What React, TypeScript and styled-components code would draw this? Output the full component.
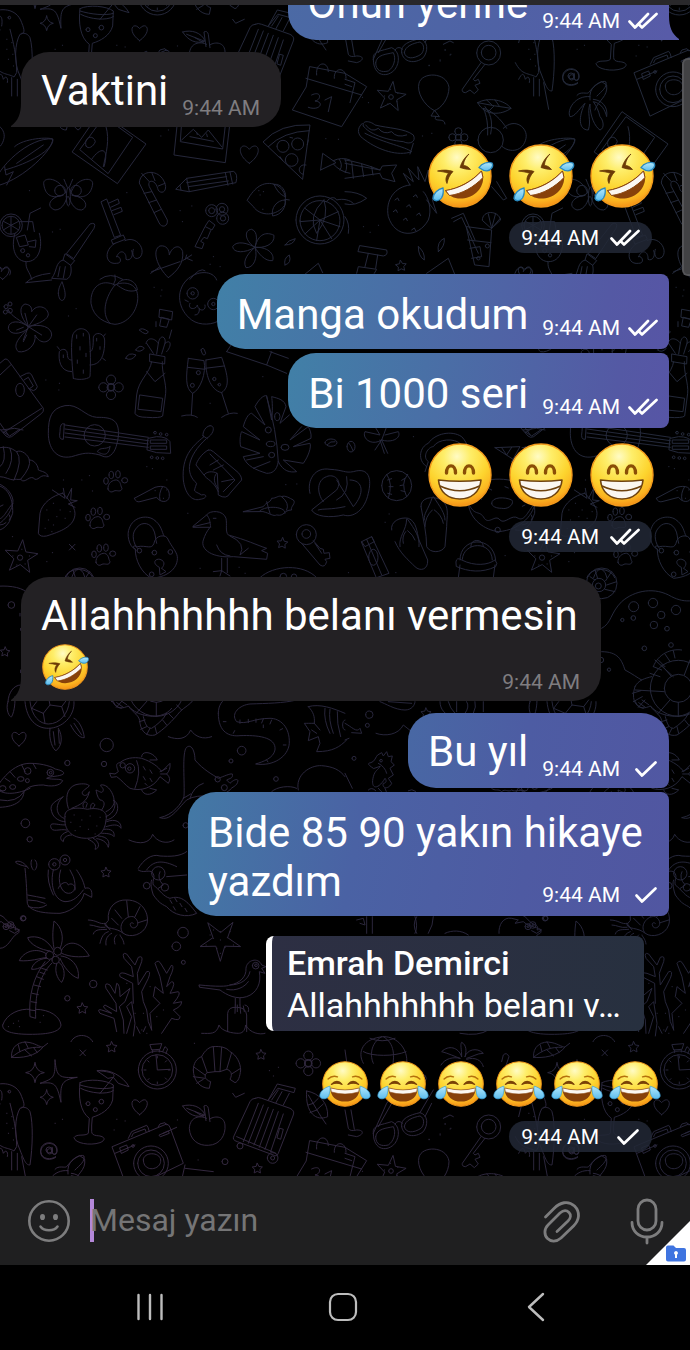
import React from "react";
import styled, { createGlobalStyle, css } from "styled-components";

const GlobalStyle = createGlobalStyle`
  *, *::before, *::after { box-sizing: border-box; }
  body { margin: 0; background: #000; }
  button { border: 0; padding: 0; background: none; font: inherit; color: inherit; cursor: pointer; }
  svg { display: block; }
`;

/* ---------- Wallpaper ---------- */

const c = (x: number, y: number, r: number) =>
  `M${x - r},${y}a${r},${r} 0 1 0 ${2 * r},0a${r},${r} 0 1 0 ${-2 * r},0`;
const e = (x: number, y: number, rx: number, ry: number) =>
  `M${x - rx},${y}a${rx},${ry} 0 1 0 ${2 * rx},0a${rx},${ry} 0 1 0 ${-2 * rx},0`;
const dots = (...pts: number[][]) => pts.map(([x, y]) => `M${x},${y}h1`).join("");
const heart = (x: number, y: number, s: number) =>
  `M${x},${y + s}C${x - s * 1.7},${y - s * 0.2} ${x - s * 0.8},${y - s * 1.5} ${x},${y - s * 0.5}C${x + s * 0.8},${y - s * 1.5} ${x + s * 1.7},${y - s * 0.2} ${x},${y + s}Z`;
const star = (x: number, y: number, r: number, inner = 0.5, turn = 0) => {
  const pts = Array.from({ length: 10 }, (_, i) => {
    const a = ((i * 36 - 90 + turn) * Math.PI) / 180;
    const q = i % 2 ? r * inner : r;
    return `${(x + q * Math.cos(a)).toFixed(1)},${(y + q * Math.sin(a)).toFixed(1)}`;
  });
  return `M${pts.join("L")}Z`;
};
const paw = (x: number, y: number) =>
  `M${x - 22},${y + 22}C${x - 24},${y + 5} ${x - 8},${y - 6} ${x + 4},${y - 5}C${x + 18},${y} ${x + 14},${y + 10} ${x + 20},${y + 20}C${x + 18},${y + 34} ${x + 4},${y + 24} ${x - 4},${y + 28}C${x - 12},${y + 34} ${x - 20},${y + 30} ${x - 22},${y + 22}Z` +
  e(x - 28, y - 2, 7, 10) + e(x - 12, y - 20, 7, 11) + e(x + 8, y - 22, 7, 11) + e(x + 28, y - 4, 9, 8);
const flower = (x: number, y: number, r: number) =>
  c(x, y, r * 0.5) + c(x, y - r, r * 0.6) + c(x + r, y, r * 0.6) + c(x, y + r, r * 0.6) + c(x - r, y, r * 0.6);
const sparkle = (x: number, y: number, w: number, h: number) =>
  `M${x},${y - h}Q${x + 3},${y - 3} ${x + w},${y}Q${x + 3},${y + 3} ${x},${y + h}Q${x - 3},${y + 3} ${x - w},${y}Q${x - 3},${y - 3} ${x},${y - h}Z`;

/* Each region holds doodles drawn at three times their final size. */
const regions: { x: number; y: number; d: string[] }[] = [
  {
    x: 0, y: 0,
    d: [
      "M-20,560C-10,500 90,410 158,417C160,450 70,535 0,555M20,555L40,515L18,525L14,500M50,490L130,435",
      "M217,455L300,335L438,432L353,550ZM240,448L312,350L398,412L325,520ZM258,438C250,410 280,402 286,425C280,440 265,450 258,438M275,478C300,440 330,440 312,500M318,380C330,420 318,460 310,500",
      "M535,340L522,465L676,488L692,350ZM546,350L541,425L668,447L678,358ZM545,420L580,388L605,412L625,390L665,440",
      "M570,410L640,424M590,398l2,6M620,402l2,8",
      heart(748, 462, 28),
      "M790,425Q840,370 930,375L908,537ZM805,440Q850,395 928,392" + c(849, 439, 18) + c(893, 432, 18) + c(875, 480, 19) + "M918,495C895,490 890,520 910,523M840,470l8,12M925,420l-3,14M870,412l8,2",
      "M962,510L968,460L1008,488L962,510M1000,482Q1025,470 1050,480M1000,492Q1020,515 1050,520M1018,478Q1030,495 1020,510M1035,478Q1045,498 1036,518",
      "M198,580C180,530 130,530 131,550C134,580 150,600 190,585C150,590 135,620 165,630C190,630 198,600 202,590M212,580C230,530 280,530 278,552C274,582 255,600 215,585C255,590 270,620 245,630C220,632 210,600 206,590" + e(205, 590, 6, 28) + "M202,562Q195,545 192,538M208,562Q215,545 218,538" + c(180, 572, 16) + c(228, 572, 16),
      "M418,548C420,505 488,505 497,560C497,583 475,580 473,565C465,535 440,540 448,560L502,660C505,680 485,685 478,670ZM425,520L448,545M455,517L465,542M495,550L475,558M432,580L455,575M446,608L470,600M462,638L484,628",
      "M528,567L560,535L700,514Q715,520 708,548L568,575ZM560,535L568,575M560,548L680,530M565,560L685,543M676,518L684,556M690,516L698,552M540,556L543,570",
      "M304,605L320,597L362,706L344,712ZM325,610L354,597L358,610L332,622M336,632L363,622L367,634L342,644M335,720L370,705L376,718L340,732Z",
      "M345,730C310,750 315,795 350,790C370,790 360,765 350,770M375,722C410,705 440,750 420,772C400,785 395,760 400,748M350,770C360,745 380,755 378,778C392,785 402,765 395,752",
      c(635, 632, 18) + c(666, 628, 18) + c(668, 655, 18) + c(635, 632, 9) + c(666, 628, 8) + c(669, 655, 8),
      "M628,662L645,675L636,690L616,680ZM614,682L585,740L606,746L612,730L602,724L612,712L622,716L632,692",
      "M742,600C765,560 790,545 820,552C850,560 862,590 855,615C830,650 780,650 760,620ZM822,553C845,550 858,575 857,590C840,585 830,570 822,553M855,600C830,600 812,625 818,648C845,645 860,620 855,600M855,598L868,600" + dots([790, 575], [780, 585], [776, 572], [788, 628]),
      c(960, 660, 72) + c(960, 662, 60) + "M960,660L915,625M960,660L900,665M960,660L915,702M960,660L950,722M960,660L995,716M960,660L1020,680M960,660L1015,635M972,600Q920,650 950,700Q990,650 972,600M980,605C990,590 1005,590 1010,600C1030,595 1050,600 1060,610",
      "M765,742C735,725 730,690 755,688C775,695 770,725 765,742C775,700 800,695 822,706C825,735 790,745 765,742C800,740 825,760 818,782C795,785 775,760 765,742C775,775 760,805 738,803C725,780 750,755 765,742C735,760 700,760 698,740C710,720 745,730 765,742",
      "M505,833C470,800 455,750 480,738C500,735 508,750 508,765C515,740 540,730 548,755C552,790 530,815 505,833M455,815L540,785M480,800L452,820M548,782L575,765M560,775L577,782M556,778L560,765",
      "M200,760L270,672Q290,665 282,685L222,775ZM196,762L224,782L212,796L190,780ZM190,780C165,785 172,815 155,835L200,838C215,830 215,810 212,796M180,800l-6,30M196,800l-6,34",
      c(33, 676, 34) + c(33, 676, 27) + "M33,676V650M33,676L56,664M33,676L56,690M33,676V702M33,676L10,690M33,676L10,664",
      "M82,690L90,640L122,624M45,700C30,750 50,785 80,785C115,785 130,745 118,700M60,665L98,665L103,695M50,712L75,705L85,735L60,740ZM85,725L108,720L106,742L88,740" + c(68, 752, 6) + c(84, 766, 5) + "M78,786C76,810 90,815 95,838",
      heart(8, 818, 20),
      "M855,735Q865,720 886,716Q880,735 855,735M855,795Q850,775 868,765Q876,790 855,795M300,838Q330,815 368,838M570,838Q600,800 615,812M900,835L955,790L968,818",
      "M930,200L1035,220L1100,260L1025,380L877,330L918,262ZM918,235L1085,285M950,225C945,185 985,180 985,215M1003,235C1000,200 1040,200 1038,235M935,285C965,270 965,300 945,303C975,305 960,335 925,322M975,300L995,290L985,335",
      dots([88, 572], [380, 578], [540, 632], [575, 618], [547, 665], [157, 696], [180, 688], [640, 770], [630, 793], [660, 800], [977, 416], [1015, 418], [482, 408], [505, 390]),
    ],
  },
  {
    x: 345, y: 0,
    d: [
      "M268,332C235,315 215,275 222,250C230,215 305,215 312,262C312,295 290,325 268,332M268,332L258,348L282,350ZM272,350C262,370 300,350 300,372",
      star(138, 291, 46, 0.42, 8) + c(138, 291, 7) + dots([136, 268], [118, 288], [128, 312], [155, 305], [158, 280]),
      "M52,370C35,385 35,405 60,420C100,450 160,470 200,455C180,440 120,430 60,400M55,378C50,360 75,362 90,375C130,385 180,385 205,405C215,425 195,435 175,425C120,420 70,400 55,378M62,375Q80,400 100,385Q115,405 140,395Q155,415 185,405M205,430L195,462",
      c(437, 420, 38) + "M475,385C510,350 550,385 543,415C535,455 495,460 472,440M437,402C445,360 435,340 420,320M428,405C430,360 420,335 415,325M415,325C440,330 470,360 485,385M398,308C430,290 480,300 498,325C470,345 420,350 398,308M398,308C430,315 465,320 498,325M425,300l15,14M450,300l12,17M430,335l16,-16",
      "M0,490L105,510M0,535L105,520M0,480Q40,485 105,510L112,498L155,495L140,520L150,545L112,535L105,522M20,485L25,535M50,492L56,530M80,500L84,525",
      flower(340, 412, 18) + "M345,435Q340,450 350,460",
      "M195,555C150,560 120,600 130,650C150,715 220,715 250,660C262,630 250,590 235,575M195,555L175,520L205,545L190,505L222,540L218,500L240,545L250,510L258,560L275,540L262,600L275,640L245,600M150,600l8,-6l4,8M145,635l8,-6l4,8M175,660l8,-6l4,8M200,690l8,-6l4,8M185,620l8,-6l4,8M215,645l8,-6l4,8M205,590l8,-6l4,8",
      "M320,655L355,640L390,720M326,665L350,652L400,760M365,680L440,690L432,800L390,795ZM368,720L438,728M375,745L405,740L410,770L380,775" + c(427, 738, 6) + c(400, 775, 5) + "M412,660C412,630 460,630 467,660L440,685ZM440,685L430,642M440,685L452,640M440,685L466,655",
      "M45,737L125,750Q130,765 115,768L40,755ZM70,760L60,800M98,765L92,805M35,820L40,800L95,808L88,820",
      "M220,740Q240,755 238,780Q220,770 220,740M280,755Q275,725 298,715Q300,740 280,755M245,820L310,775L330,825" + star(168, 798, 17, 0.5, -5),
      "M510,820C520,790 540,805 535,815C550,790 570,810 560,825",
      "M735,300C730,260 760,250 770,245L785,255C790,290 760,300 750,330M735,290C690,285 665,330 675,350C690,350 700,330 720,310C700,350 700,390 730,390C740,360 725,340 735,312C735,350 750,380 765,390C780,385 775,360 765,350C760,330 755,320 745,305C770,310 780,330 785,350C790,320 770,300 745,298",
      c(680, 232, 8) + "M688,222L688,238C700,248 705,235 700,222C690,200 655,205 653,235C655,260 685,260 698,250",
      "M575,440C600,415 680,410 690,418C690,450 620,490 545,510M440,560L475,600L485,595L455,545M0,575Q40,575 65,595Q30,620 0,612M0,650Q15,670 10,700",
      dots([252, 197], [285, 183], [315, 165], [300, 150], [232, 408], [260, 400], [55, 680], [100, 676], [75, 697], [70, 308], [52, 292]),
    ],
  },
  {
    x: 0, y: 280,
    d: [
      "M85,140C60,110 55,80 75,72C95,75 95,85 95,95C110,70 145,80 145,105C140,125 100,135 85,140C120,130 155,140 155,165C150,190 120,195 105,165C110,195 80,220 55,215C35,195 60,170 85,145C60,165 30,165 25,145C25,120 60,120 85,140M85,140C60,120 35,110 25,90M85,140L110,105M85,140L125,165M85,140L70,180M85,140L75,100M70,185l10,-20M50,150l20,-8",
      c(18, 80, 6) + c(30, 72, 6) + c(16, 96, 6) + c(30, 92, 7),
      "M345,15C305,-5 270,20 273,70C280,115 320,130 345,133C390,130 420,80 412,40C405,5 365,5 345,15C320,45 300,100 330,130M340,15Q350,0 345,-15M350,14C370,-15 410,0 412,30C385,40 365,25 350,14",
      "M560,0C525,35 535,90 575,120C600,138 640,135 660,120M560,0C590,-30 640,-30 650,0" + c(578, 40, 17) + c(578, 40, 5) + c(640, 72, 17) + c(640, 72, 5) + "M570,70C560,90 590,90 592,75C595,95 620,95 615,75M598,85Q600,105 585,105M555,60l10,5",
      "M175,40C175,20 185,10 186,5C195,30 200,50 190,60C182,65 176,55 175,40M78,8L155,0M78,8Q100,-15 150,-20",
      "M220,295C215,240 212,190 218,165C228,140 260,140 268,165C272,210 272,260 270,290C260,300 230,300 220,295M215,275C180,275 175,240 178,215C185,205 200,205 202,220C202,240 210,240 215,240M270,255C300,255 315,230 314,180C312,155 280,155 280,175C280,210 275,215 270,215" + "M230,165v10M250,160v8M240,200v10M258,220v10M232,240v10M250,270v10M290,175v8M300,200v8M190,225v8M172,200l6,8M310,170l6,-8M308,235l8,6",
      flower(333, 322, 23) + c(333, 322, 10),
      "M455,245C450,280 415,300 410,345L405,400Q410,412 440,412Q480,415 488,408L497,340C500,310 485,280 487,245M450,222L495,230L494,252L450,245ZM438,190C445,165 470,180 475,190C480,160 500,170 495,190C515,175 515,200 500,215M460,220L440,190M470,222L475,190M485,222L495,190M440,275L465,305L495,280M420,345L488,355L483,395L415,388Z",
      "M480,88L518,95L515,120L478,112ZM485,112L508,118L500,142L480,138ZM418,150Q425,140 445,155Q440,170 418,150M407,210Q420,190 433,205Q420,220 407,210M377,235Q385,215 408,225Q395,245 377,235M515,150L508,175M468,125V140",
      "M565,235L612,242C620,280 600,330 578,340C555,325 558,290 565,235M563,262L615,268M618,240L665,232C685,290 690,320 665,338C630,330 615,280 618,240M615,265L672,258M578,340L574,405M545,408Q575,400 592,412M665,338L685,400M665,412Q690,395 712,400M603,210Q610,195 617,220Q610,235 603,210" + c(595, 278, 6) + c(577, 316, 6) + c(643, 297, 5) + c(658, 314, 4),
      "M-60,300L15,237Q22,235 28,245L130,385Q132,395 125,400L35,470Q25,475 18,468L-60,380M0,285L32,255M0,430L25,465M10,458L125,385M60,290L80,280Q90,275 95,285L112,320Q110,330 100,332L85,325M72,300L85,292L100,318L90,325" + e(60, 330, 13, 20),
      "M300,525C260,515 250,520 215,530C165,540 145,500 145,460C145,410 155,385 195,377C235,370 255,410 290,412C330,412 360,415 355,470C350,500 345,520 325,530C315,532 310,530 300,525M193,432L190,478Q175,480 180,455Q180,425 193,432M195,435L445,472M195,447L445,482M195,459L445,492M195,471L445,502M445,475L470,470Q500,470 510,485L512,520L470,518L442,510ZM452,480H500V490H452ZM452,498H500V508H452Z" + c(284, 466, 32) + c(465, 458, 4) + c(482, 462, 4) + c(500, 464, 4) + c(455, 532, 4) + c(472, 534, 4) + c(488, 535, 4) + "M330,500C325,530 310,525 292,515C300,500 315,510 330,500",
      "M0,503C30,498 40,510 50,515C65,508 85,525 88,540C105,540 115,560 115,570C125,575 140,575 145,590C120,580 120,600 105,598C90,580 75,615 62,598C50,600 45,595 42,600C30,600 15,590 0,590M30,505Q45,540 18,580M50,515Q70,540 42,600M88,540Q95,560 62,598M10,500Q20,545 0,560",
      "M630,437C610,440 605,470 612,470C575,500 545,530 550,600C555,640 575,665 600,658C625,655 620,640 605,645C580,630 580,640 590,610C555,580 560,530 620,475C645,460 645,435 630,437M608,467L622,476",
      "M625,510C605,520 590,545 588,555L612,585C620,575 635,572 652,580L655,645Q680,660 690,640L725,600C725,590 720,585 715,578L640,515Q632,508 625,510M630,522L705,600L670,635M612,585C620,600 640,600 655,635M630,555L655,540M640,570L670,555M665,605L700,598M655,625C640,610 640,590 650,580",
      "M835,545C830,575 815,580 800,580C770,570 740,560 730,530L780,520L722,500C718,480 722,460 725,455L780,480L730,440C735,420 745,400 755,400L795,435L765,380C775,360 790,345 800,347L815,420C820,380 815,350 815,350C835,355 855,360 858,380L840,430L868,405M835,545C850,575 870,578 890,575L850,540L910,550C925,530 935,500 930,490L880,500L933,475C935,460 930,450 925,440L870,480L905,440M800,350Q830,450 835,545M740,540L790,530M760,565L810,545" + e(812, 492, 13, 8) + e(855, 502, 12, 9) + e(832, 410, 8, 12) + e(815, 525, 9, 8) + e(805, 450, 9, 9),
      e(993, 488, 18, 11) + "M982,494Q992,482 1005,485",
      "M730,695L790,680C800,665 810,670 815,655C830,655 835,645 845,650C855,645 870,655 880,660C890,670 870,680 875,690C850,690 855,710 830,705C820,710 810,700 790,695ZM780,692C800,675 860,680 855,700M800,665L810,700M845,650Q870,670 860,690",
      "M188,640C160,645 125,670 120,700L115,760Q120,772 140,768C180,755 225,740 225,700C225,680 200,650 188,640ZM157,630L195,655L190,625M200,655L215,625L212,660L232,662L205,672L225,682" + dots([140, 690], [160, 670], [180, 690], [145, 720], [170, 710], [195, 715], [135, 745], [160, 735], [210, 695], [155, 755]),
      paw(346, 605), paw(292, 715), paw(310, 825),
      "M403,655L465,622C490,615 510,620 508,650C505,670 480,668 470,652L420,665Q408,668 403,655M488,620Q475,640 480,660" + dots([490, 655], [500, 630], [465, 632]),
      "M406,808C385,800 380,760 388,745C400,710 440,705 460,718C485,735 485,755 492,768M412,805C400,790 395,765 405,750C420,725 445,725 458,745C468,760 465,775 470,790M406,808C395,800 400,795 412,800C440,795 455,810 462,790C465,765 500,760 505,780C515,800 530,815 532,830C535,860 510,890 455,895C425,880 405,840 406,808" + c(418, 812, 7) + c(463, 818, 7) + c(511, 816, 7) + c(455, 883, 7) + "M485,865L498,875L480,885L478,862C455,850 465,835 480,838C500,845 490,860 485,865",
      "M580,738L620,705C630,690 670,690 678,715C682,735 675,755 685,765C740,780 770,795 800,805L785,812L803,820L800,838L700,830C640,835 600,810 610,780C615,765 620,755 630,742L580,742ZM580,740L630,728M620,705C630,715 630,725 632,742M665,835V875M682,835V878M640,875L665,872L660,888M665,872L690,888M650,795Q660,825 690,828M690,768Q740,790 720,825L745,805M640,715h8",
      star(847, 790, 17, 0.5, 5) + c(919, 764, 30) + c(919, 762, 13) + "M905,790L960,855Q975,865 980,845L975,838L990,835L988,818L972,820L970,808L960,805L940,782M945,790L965,820",
      star(63, 832, 52, 0.42, 6) + c(60, 833, 8) + dots([65, 808], [38, 828], [50, 855], [75, 852], [88, 828]),
      "M930,640C920,600 945,560 990,568C1030,570 1035,580 1060,575C1110,560 1115,600 1105,640C1095,690 1060,715 1030,705C990,715 945,710 935,690L1010,630C1030,600 1000,580 980,590C950,600 950,640 970,665M1035,680C990,690 970,685 955,690M1040,590Q1050,640 1010,660M1050,600C1090,600 1095,640 1060,680L1010,600",
      "M-20,615C20,615 40,650 38,700L28,725C15,745 0,755 -20,750M28,705Q35,715 28,720M0,735Q10,735 18,728",
      "M195,893C205,860 265,860 278,893M215,893Q222,870 235,868M255,893Q252,875 240,868M780,893C820,855 910,850 950,893" + c(850, 890, 10) + c(882, 890, 8),
      "M680,215L700,185M680,215L800,255L815,215M800,255L860,280M810,215L865,235" + "M208,793L225,810M225,793L208,810",
      dots([205, 108], [228, 86], [137, 300], [178, 310], [176, 330], [440, 560], [457, 566], [500, 600], [245, 600], [268, 587], [190, 600], [277, 633], [37, 770], [157, 818], [140, 845], [563, 700], [735, 880], [600, 865], [717, 862], [630, 370], [788, 290], [462, 22], [485, 30], [482, 48], [857, 614], [890, 612]),
    ],
  },
  {
    x: 345, y: 280,
    d: [
      e(18, 500, 12, 16) + "M12,490Q20,500 24,512",
      "M110,480C80,500 50,475 60,455L105,465L90,440M110,480L125,440M110,480C140,490 170,475 160,455L120,465M110,480L128,520M105,480L118,520M110,480L90,510",
      "M245,560C215,540 225,500 250,490C270,460 320,450 350,470C370,490 375,520 370,540M240,575L250,545C230,530 250,500 265,500C280,475 330,475 345,490",
      "M450,503L525,500L500,545M450,503L520,548M470,503L485,525L500,502",
      c(155, 617, 45) + "M125,583Q145,610 130,655M188,583Q165,610 185,650M128,600l12,-4M132,620l12,0M128,640l12,3M180,595l-10,6M175,615l-10,2M180,635l-12,-3",
      "M228,680C225,655 260,645 290,660C315,680 305,710 305,740L300,800C290,820 255,820 245,800C245,760 235,720 228,680M262,652C250,690 235,700 238,720M265,650C285,680 300,700 300,720M262,690Q240,710 240,740M268,690Q290,705 295,730",
      "M140,750C135,725 165,710 190,715C215,725 215,755 222,780L248,840C250,870 225,875 210,860C190,840 165,820 150,785M185,718C185,750 160,770 165,800M188,718C210,750 225,770 222,800M182,755Q170,770 175,790M188,752Q205,765 210,780",
      "M50,785L80,770L132,880L95,893ZM65,778L110,885M50,785L60,800L88,785L80,770" + e(85, 832, 14, 24),
      "M340,893L345,855M445,893L450,855M333,845Q335,830 350,840C390,860 430,855 450,840Q460,850 452,860C410,880 370,875 335,860ZM345,840C345,770 445,765 452,840M352,838C355,785 440,780 442,840M378,800C375,775 415,775 415,800",
      "M370,670C375,640 395,610 430,600C490,590 560,610 570,660C570,700 530,750 460,755C420,750 375,720 370,670C390,710 400,690 415,710C430,740 450,700 465,720C480,735 500,700 520,715C540,725 550,690 570,670M440,670C440,650 480,650 500,660C510,670 490,690 470,685C455,685 440,680 440,670M400,650l10,8M430,625l10,5M480,620l10,4M530,650l-8,6M540,675l-8,4" + c(458, 750, 8),
      "M535,450L575,445L600,450M540,455L560,468L590,448",
      dots([205, 470], [132, 702], [120, 727], [480, 827], [152, 878], [10, 878], [277, 893]),
    ],
  },
  {
    x: 0, y: 570,
    d: [
      "M-20,50C20,45 60,50 78,65" + c(34, 105, 10) + star(15, 246, 15, 0.5, 4),
      "M24,395C15,420 30,445 35,440C45,420 45,395 45,380M62,345C40,345 25,370 24,395M75,395C80,450 110,475 145,475C185,475 225,440 222,395M90,395C95,440 120,462 145,462C180,462 205,430 208,395M110,395L95,415L130,430M130,430L150,405L185,410L195,440M150,405L145,380M130,430L135,460M185,410L200,390M150,475C145,510 160,540 168,542C185,530 190,500 175,475M160,485L165,525M175,480L178,520M212,465C225,490 240,505 253,503C250,475 235,450 222,445M222,460L245,495",
      heart(57, 506, 22),
      c(320, 525, 20) + c(202, 579, 8) + c(312, 582, 8) + c(725, 542, 13) + c(693, 573, 6) + c(828, 627, 7) + c(557, 766, 8) + c(76, 760, 13) + c(89, 808, 8),
      "M505,500C530,510 560,510 572,480C585,500 610,510 635,500M387,810C420,825 450,820 458,793C470,815 500,825 522,810",
      "M340,395C350,420 370,415 385,408C400,430 420,435 420,460C425,490 445,500 465,495C490,480 520,450 540,425C555,410 570,405 580,390M385,408C395,420 410,430 430,435M430,435C470,445 500,435 515,415M418,455L435,450M422,478L440,470M440,494L450,475M470,490L465,470M500,465L488,450M520,445L505,430M545,420L530,405M430,440C435,460 440,475 455,475C470,465 490,450 500,430M350,398l20,14M360,390l20,14",
      "M655,430C655,380 700,370 760,370M655,430C655,490 690,500 720,497C770,495 830,500 825,540C820,565 790,575 767,582C820,590 865,560 868,520C870,470 840,445 810,445C760,445 740,465 710,455C690,430 720,405 750,402C800,400 850,400 890,390M720,450v10M745,448v10M768,447v10M790,447l-5,12M815,450l-5,12M790,465v8M850,525h8M670,455h8M700,490l4,-8M800,570l4,6M840,480l8,-4",
      "M925,410C960,400 1000,415 1035,430M925,410C940,425 945,440 943,460C930,460 920,460 913,460L930,485L925,512L955,500L960,520L950,545C1000,545 1020,530 1040,510M943,460L960,480M975,415Q970,450 990,490M990,418Q985,450 1000,490M1012,425Q1010,460 1022,500M935,480l15,10",
      "M330,610L345,612L355,605C350,590 345,580 360,578C375,565 400,560 425,565C455,575 475,590 485,605L510,580Q512,600 500,612Q515,625 505,640L480,620C460,655 420,665 390,655C375,645 365,630 350,620L335,622ZM410,572Q425,605 405,655M425,560C425,540 460,545 472,570L450,570M425,660C430,675 450,680 470,660L450,655M480,605L500,595M482,612H500M430,590l6,10M430,620l6,10M450,600l6,10M450,625l6,10M435,640l6,6" + c(368, 586, 8) + c(390, 595, 14) + c(388, 596, 5),
      "M480,743C520,735 545,700 552,680C555,640 545,545 560,532C575,520 585,545 585,570C610,600 640,615 655,625C670,620 690,610 697,612C700,625 690,625 680,630L690,640C700,630 712,625 714,632C712,650 695,650 690,660C660,690 600,665 560,690C530,720 510,755 480,743M570,685Q580,650 610,640M550,685L572,672" + c(653, 628, 8) + c(673, 653, 9),
      "M-20,670C0,630 40,580 90,580C130,580 160,592 165,597C180,600 195,605 190,612C180,620 150,618 140,625C160,630 180,625 188,632C180,650 150,650 130,645C90,645 80,655 72,665C70,690 50,710 0,712M-10,655C10,680 60,670 90,655M30,605L45,622M65,585L75,605M15,625L30,635M100,582L108,596M0,690Q50,700 72,665" + c(151, 608, 10) + c(152, 608, 4) + c(83, 603, 10) + e(62, 627, 10, 7) + e(82, 632, 6, 6) + e(38, 651, 9, 7) + e(8, 655, 10, 8),
      "M195,740C190,715 230,710 262,718C300,710 325,725 318,750C315,790 290,805 260,805C215,805 190,780 195,740M205,715C195,685 200,655 225,645C240,640 265,640 268,648C255,660 240,665 250,675C260,680 265,670 268,665C262,695 240,705 215,715M305,720C320,700 310,690 300,690C290,680 290,665 288,660C300,665 305,670 308,665C315,655 300,650 302,645C330,640 350,690 340,705C335,715 325,722 318,725M250,712C245,700 255,690 262,700L258,712M272,715C270,700 280,695 285,705L278,715",
      "M192,745C165,735 165,700 190,680C175,690 145,700 155,725C160,745 180,755 195,755M195,765C170,765 150,755 152,770C155,790 180,775 200,780M202,785C175,795 180,810 190,815C190,800 205,795 215,795M318,740C345,730 350,700 340,690C360,700 360,740 320,750M320,755C345,745 365,755 363,775C355,760 335,765 318,770M312,778C335,775 345,785 342,800C335,790 315,790 305,790M295,798C325,800 330,815 325,832C320,815 305,808 290,806M280,805C300,815 300,835 285,838C292,825 280,815 265,808" + dots([222, 735], [245, 750], [270, 738], [300, 742], [212, 757], [240, 770], [265, 778], [290, 768], [225, 782], [285, 792]),
      "M80,890C60,885 45,880 47,875C60,870 75,880 85,895M95,870C90,880 95,895 100,900M105,870C115,880 110,895 105,900M415,895C430,870 455,850 480,858C510,860 540,860 560,845M440,900C460,870 490,870 530,890" + c(163, 883, 17) + c(195, 870, 15) + c(163, 883, 5) + c(195, 870, 5),
      "M895,660C885,615 930,585 965,587C1000,590 1020,600 1035,620M815,665C830,650 870,645 890,655M60,130v8M62,175v6M62,300v8",
    ],
  },
  {
    x: 345, y: 570,
    d: [
      c(93, 340, 0) + "M105,395C120,400 150,420 180,420C200,420 210,405 210,395M130,395L200,400M285,395C285,420 300,430 320,445M310,395Q315,415 330,430M335,395v30M365,395Q375,410 360,430M390,395Q395,410 385,430M415,395v30" + star(243, 430, 16),
      c(73, 434, 11) + c(67, 466, 6) + c(27, 565, 6) + "M93,490C120,500 160,495 175,465L200,485M0,460C20,470 35,490 45,475L50,490L20,488M0,450C-10,450 -10,480 0,480M0,510L12,505",
      "M85,595C70,585 65,580 78,578C90,575 92,560 98,555L110,548L115,558L125,545L130,560L142,558L138,575L148,585L135,595L145,615L130,625L140,640C130,660 110,655 115,640C125,640 125,630 120,625C100,660 75,660 85,620C90,600 100,600 105,590ZM100,580Q120,590 125,610" + c(108, 572, 4),
      "M100,655Q140,700 120,655M0,610L22,655M70,660Q80,650 92,662M190,662Q200,655 212,664M440,655C450,665 460,655 470,665C480,655 490,668 500,660C510,668 530,655 540,664",
    ],
  },
  {
    /* Octopus cloud, lifebuoy and shell on the left edge of the next tile. */
    x: -177, y: 570,
    d: [
      c(770, 40, 46) + c(762, 45, 20) + c(760, 48, 9) + "M735,20L750,30M750,0L758,25M800,5L782,32M815,35L785,45M810,65L780,58",
      "M770,175C800,160 795,130 830,95C870,60 930,50 980,80C1000,90 1020,95 1040,92M770,245C820,245 830,270 840,300C860,310 880,325 890,330",
      c(866, 110, 15) + c(924, 99, 14) + c(993, 120, 14) + c(949, 135, 11) + c(927, 165, 11) + c(865, 144, 7) + c(832, 150, 5) + c(966, 176, 7) + c(898, 235, 7) + c(978, 225, 7) + c(792, 299, 5) + c(768, 270, 8),
      c(1000, 355, 84) + c(1000, 355, 42) + "M930,270L985,320M870,360L958,365M940,430L975,390M1000,397V440M950,285L978,318M1035,270L1018,315",
      "M925,290C940,250 980,235 1010,240M915,310L945,320M925,290L950,300M870,350C860,380 865,410 895,415M870,350C880,330 900,325 920,320M862,370L888,362M865,395L892,380M880,412L900,390M940,270l20,20M960,252l15,22M985,242l5,22",
    ],
  },
  {
    x: 0, y: 870,
    d: [
      "M75,-5C80,40 80,70 82,100C90,125 130,130 180,130C220,125 250,90 252,70L275,82C278,60 270,50 255,55C250,30 240,15 230,0M160,0C150,40 160,90 195,95C220,95 235,80 250,60M182,0C170,35 185,70 205,70C225,70 230,50 220,20L210,0M175,55C180,40 200,30 205,45C215,35 230,50 225,60M83,75Q110,80 135,85M85,90Q110,90 135,100M85,110Q120,120 140,105M145,0Q140,35 160,75",
      star(318, 8, 16) + c(71, 145, 7),
      "M415,0C430,10 440,0 455,5C470,20 455,30 460,45C480,60 490,80 510,85C540,75 560,90 590,130C560,145 520,135 500,110C480,100 475,95 460,75C455,60 450,40 455,30M480,5Q470,25 490,45L475,55M500,20L560,15M510,90l6,10M525,85l6,10M540,100l6,10M520,110l6,10M555,115l6,10" + c(440, 47, 10) + c(495, 52, 11) + c(475, 10, 20),
      "M325,150C320,110 350,88 380,90C430,90 450,135 440,165C430,195 390,205 370,190C345,170 320,180 315,165ZM370,190C350,170 375,135 400,140C425,155 410,180 395,172C385,160 395,155 400,160M345,120L365,145M380,92L385,140M420,110L405,140M440,150L415,158M335,145L355,165M265,150C290,150 300,165 315,160M270,165C285,165 295,175 315,172M280,192C285,175 305,180 320,178M300,220C305,200 310,190 325,185M318,225C315,205 325,195 335,190M345,222C340,205 345,200 350,195M372,222C370,205 360,200 360,195M315,160L330,180",
      "M0,135C15,140 20,155 30,160C45,165 50,170 45,180C60,175 60,190 50,192C35,200 25,235 0,235" + c(18, 170, 9) + c(32, 165, 10) + c(18, 170, 3) + c(33, 166, 3),
      c(149, 256, 12) + c(173, 244, 12) + c(167, 270, 11),
      "M162,235C155,200 160,170 162,153C185,170 195,205 180,235M160,240C140,205 110,195 83,203C90,225 125,240 150,243M140,252C110,230 70,245 58,272C90,275 120,265 140,262M140,265C115,265 95,285 95,298C120,300 140,280 150,270M185,240C200,210 240,210 268,258C240,262 210,262 185,250M183,258C210,260 240,285 235,325C215,320 190,290 180,265M170,282C160,310 180,335 185,337C200,315 190,285 178,278M135,275C100,320 85,380 90,440L107,445C105,380 115,320 155,280M125,295L142,300M110,320L130,328M102,345L122,350M97,370L115,374M93,395L110,398M90,420L107,422M120,307L135,312",
      "M8,465C20,430 60,415 90,418M107,418C150,418 180,440 183,465C180,490 130,493 90,493C40,493 5,485 8,465" + dots([55, 453], [40, 460], [25, 470], [58, 470], [130, 437], [120, 457]),
      c(280, 342, 11) + c(202, 385, 8) + c(529, 229, 13) + c(549, 188, 16) + c(550, 277, 6) + star(247, 416, 17),
      star(661, 210, 64, 0.36, 36) + dots([661, 210], [661, 185], [640, 205], [682, 203], [650, 235], [675, 232], [661, 250], [630, 195], [690, 185], [640, 180], [618, 225], [700, 225]),
      "M350,485L342,445L300,430Q290,415 305,420L335,430Q300,410 315,405L350,425L348,400L318,355Q312,335 330,345L345,370L350,340Q360,340 360,380L390,355L375,395L358,410L370,450L372,490M400,400L398,340L360,320Q355,305 375,310L400,320L395,290L372,265Q365,245 380,252L405,285L415,262Q430,255 425,275L412,310L415,345L440,305Q455,300 445,325L425,365L430,395L440,420L445,455L455,480M455,480L450,430L480,400L460,380L465,350L490,370L480,320L465,280Q475,265 485,285L500,310L515,285Q525,290 510,320L500,350L515,335Q530,335 510,370L535,365Q545,370 520,400L545,395Q545,410 520,420L540,440Q540,455 515,445L485,490M380,490L395,440L380,410L395,395L405,460L400,498M420,490L410,470M430,485L437,470" + dots([430, 430], [450, 350], [405, 430], [470, 440], [490, 420], [380, 340], [425, 480], [440, 490]),
      "M598,345C650,350 680,350 690,345C720,340 740,320 738,295C740,270 775,260 785,285L798,290L785,295L795,310L778,305C785,340 770,370 740,380C710,390 680,375 660,360L600,352ZM690,345C720,345 745,330 750,305M680,358C710,365 735,350 745,335M706,385V405M720,385V405M683,485V430Q685,410 710,412Q738,412 740,435V485M706,405L705,430M712,405V425M720,405L722,430M730,408L733,425M745,425Q750,408 735,405M605,490C630,490 650,495 657,465C665,485 700,490 715,490C725,490 735,485 737,465C750,490 780,495 795,490" + c(767, 287, 10) + c(768, 286, 4),
      "M35,562C30,530 60,510 90,518C110,522 125,535 130,530L143,520M35,562C60,565 110,560 130,530M35,562C60,540 90,530 120,532M60,545L55,525M85,535L75,515M75,540L95,558M100,532L112,548",
      "M213,515C225,490 265,490 278,515M240,540L256,557M257,540L240,557M698,670L707,682L733,670",
      star(335, 532, 17) + star(783, 555, 16) + flower(925, 580, 23) + c(925, 580, 10),
      sparkle(105, 608, 28, 30) + sparkle(140, 682, 20, 22) + "M165,570C170,620 175,625 232,622C185,630 180,640 183,697C170,640 165,635 120,640C165,625 165,620 165,570",
      "M240,638C265,625 320,630 340,645L338,690C330,720 300,735 277,742L275,765V785Q275,795 290,797C315,798 320,810 300,818C270,828 225,820 222,803C230,790 255,800 265,790L268,745C240,725 235,680 240,638M242,655C270,670 320,675 340,662M240,645C270,655 320,660 340,652M300,670L340,622M292,602C330,595 370,620 387,650L370,645L355,640L340,622L325,625ZM340,622C350,610 330,605 292,602" + c(264, 701, 6) + c(304, 695, 7) + c(286, 719, 6),
      c(472, 600, 57) + c(472, 600, 46) + "M468,555L472,600L510,598M450,525L455,540L480,538L485,522ZM458,540V548M478,540V546M488,545L495,530L503,537L498,550M472,558v6M472,636v6M432,600h6M505,600h6M500,572l-4,4M443,572l4,4M443,630l4,-4M500,628l-4,-4",
      "M580,600C580,580 590,565 605,560C615,540 630,530 640,530C660,528 680,532 690,545C710,555 722,580 722,600C720,620 715,635 705,638L690,628C700,610 690,600 680,598L660,605H645L622,608C610,615 615,630 632,635L628,655C600,655 580,630 580,600M605,560L622,608M640,530L645,605M665,532L660,605M695,548L680,598M580,590L615,615M580,620L615,625M722,595L695,612M590,640L610,628",
      heart(419, 710, 24),
      "M620,745C600,735 570,740 568,775C570,810 595,828 625,826C660,825 678,795 675,765C672,735 640,738 628,748M618,752L612,708Q622,703 625,715L630,755M548,708C575,700 605,710 615,735C590,745 565,735 548,708M560,715L612,735M610,740L585,725",
      "M765,685Q775,680 785,685L870,715Q885,722 880,735L835,850Q830,862 820,855L712,815Q695,810 702,798L750,695Q755,685 765,685ZM775,700L730,815M790,705L745,820M805,712L762,825M820,718L778,832M835,725L795,838M850,732L812,845M710,800L828,850M805,690L832,642L886,655L882,668L835,655ZM835,660L815,690M868,670L850,705M846,665L828,698M840,775L850,778L842,808L832,804Z" + c(818, 864, 16) + c(818, 864, 6) + c(720, 828, 9),
      "M920,663C960,670 985,700 983,740C950,755 915,730 920,663M925,675C940,700 955,730 978,762M940,700L925,705M940,700L955,685M950,720L930,728M950,720L970,702",
      "M337,830L500,762Q508,765 510,772L550,880L385,960ZM385,805L395,785L440,766Q445,770 448,785M395,800L400,790L435,777L438,785M360,833L380,825L385,840L365,850ZM478,795L505,783L508,790L482,800ZM345,850L405,825M490,790L530,772M475,770L480,762L495,758L500,765" + c(453, 880, 52) + c(453, 880, 40) + "M430,870C430,845 480,845 482,870C485,900 430,910 430,870" + c(399, 828, 4),
      "M-30,650C0,635 50,635 65,680C75,705 75,712 60,715C45,740 40,800 60,840C75,880 80,885 90,885C98,830 100,760 90,725C85,715 75,710 65,712M-20,670C0,650 10,660 5,690M30,700C40,740 50,780 50,830L42,843C20,830 0,840 -20,800M35,845V900M52,850V900M65,860L80,940M-10,850C0,830 5,830 10,850C20,835 25,850 22,860M-30,680L0,700L-10,740" + c(28, 665, 4) + dots([20, 730], [35, 740], [20, 760], [38, 775], [25, 790], [40, 810]),
      c(147, 840, 9) + "M156,832V848C165,860 175,845 170,832C160,810 120,815 122,845C125,870 155,870 167,860M165,898C175,885 195,895 200,890C215,870 240,850 252,858C255,875 240,885 225,900",
      "M555,885L545,930M555,895L640,905" + c(675, 875, 9) + star(772, 896, 16),
      dots([583, 520], [808, 602], [835, 592], [820, 618], [165, 760], [187, 748], [350, 748], [375, 753], [342, 780], [532, 750], [594, 870]),
    ],
  },
  {
    x: 345, y: 870,
    d: [
      "M35,150L55,145L60,165L45,160M65,140V190M82,140V190M210,140Q220,170 210,190M265,140Q265,165 250,190M300,190C320,180 350,180 370,195M215,140Q200,165 215,190",
      "M462,190C460,165 475,140 500,145L520,150L510,160L535,155C545,165 560,170 580,175L590,180L575,190L560,182" + c(600, 145, 8),
      "M55,580C35,545 55,505 115,500C160,500 190,540 185,580M55,545C80,560 150,560 183,545M110,500C75,520 75,560 85,580M115,500C150,520 150,560 140,600M75,505Q110,520 150,505",
      "M350,560C340,530 310,525 290,545C310,550 330,560 345,565M350,560C350,535 345,525 350,517C365,525 365,545 360,560M360,560C365,540 395,530 415,550C395,550 385,560 365,565M345,565C325,560 300,565 288,585M365,568C390,560 410,570 415,590",
      "M470,575L475,555Q485,545 492,560L482,590M345,490Q400,500 430,480M0,540L5,575",
      "M85,790C80,765 110,765 140,755C165,765 165,800 150,820C130,845 85,845 85,790M92,800C95,775 125,775 145,770C155,790 145,815 130,825C110,830 92,825 92,800M170,770C165,745 195,735 225,728C250,735 250,765 235,785C210,805 175,800 170,770M178,770C180,750 205,742 225,738C240,745 238,765 228,775C205,790 182,790 178,770M150,765C150,755 165,750 172,760M85,790L125,700Q145,680 150,660M240,740L260,700M100,770L140,700M225,728L265,660",
      c(431, 771, 36) + c(431, 770, 22) + "M408,800L352,880Q350,890 362,890L375,882L388,893L400,882L390,868L405,862L400,850L390,855L385,850L420,805",
      "M0,720L10,775Q15,785 35,780C60,780 55,795 35,800L10,795M18,720L28,778M0,850L30,860L15,920M0,865L20,872M295,745L315,735L325,740",
      dots([252, 808], [285, 792], [317, 775], [300, 762], [205, 625]) + flower(215, 625, 18),
    ],
  },
];

const TILE_W = 522;
const TILE_H = 1074;

const WallpaperSvg = styled.svg`
  position: absolute;
  inset: 0 auto auto 0;
  pointer-events: none;
`;

const Wallpaper = () => (
  <WallpaperSvg width="1566" height="2148" viewBox="0 5 1566 2148" aria-hidden="true">
    <defs>
      <g id="doodles" fill="none" stroke="#fff" strokeWidth="3" strokeLinecap="round" strokeLinejoin="round">
        {regions.map((r, i) => (
          <g key={i} transform={`translate(${r.x} ${r.y}) scale(.3333)`}>
            {r.d.map((d, j) => (
              <path key={j} d={d} />
            ))}
          </g>
        ))}
      </g>
      <mask id="wallMask" maskUnits="userSpaceOnUse" x="0" y="0" width="1566" height="2153">
        {[-1, 0, 1, 2].map((i) =>
          [-1, 0, 1].map((j) => <use key={`${i}${j}`} href="#doodles" x={i * TILE_W} y={j * TILE_H} />)
        )}
      </mask>
      <linearGradient id="wallInk" gradientUnits="userSpaceOnUse" x1="0" y1="900" x2="690" y2="400">
        <stop offset="0" stopColor="#34283f" />
        <stop offset="0.5" stopColor="#26253a" />
        <stop offset="1" stopColor="#23293a" />
      </linearGradient>
    </defs>
    <rect width="1566" height="2153" fill="url(#wallInk)" mask="url(#wallMask)" />
  </WallpaperSvg>
);

/* ---------- Emoji ---------- */

const EmojiDefs = () => (
  <svg width="0" height="0" aria-hidden="true">
    <defs>
      <radialGradient id="face" cx="0.45" cy="0.2" r="0.85">
        <stop offset="0" stopColor="#fffbc4" />
        <stop offset="0.25" stopColor="#feee6a" />
        <stop offset="0.6" stopColor="#fdd42e" />
        <stop offset="0.82" stopColor="#fbb421" />
        <stop offset="1" stopColor="#f28312" />
      </radialGradient>
      <linearGradient id="tear" x1="0" y1="0" x2="0" y2="1">
        <stop offset="0" stopColor="#b4e8fb" />
        <stop offset="1" stopColor="#5cbdee" />
      </linearGradient>
    </defs>
  </svg>
);

const Face = () => (
  <circle cx="32" cy="32" r="31" fill="url(#face)" stroke="#f39a1c" strokeWidth="1.4" />
);

type EmojiName = "rofl" | "grin" | "joy";

const labels: Record<EmojiName, string> = { rofl: "🤣", grin: "😁", joy: "😂" };

const EmojiSvg = styled.svg<{ $size: number }>`
  width: ${(p) => p.$size}px;
  height: ${(p) => p.$size}px;
  overflow: visible;
  flex: none;
`;

const Emoji = ({ name, size }: { name: EmojiName; size: number }) => (
  <EmojiSvg $size={size} viewBox="0 0 64 64" role="img" aria-label={labels[name]}>
    <Face />
    {name === "rofl" && (
      <>
        <path d="M9.500 27C15 25.500 21 26 25 27.500C21.500 31 20 34.500 19 39.500C17 36 18 32 20.500 29.300C17 28 13 27.500 9.500 27ZM41 10C37 14 35.500 18 35.500 21.500C38 21.500 40.500 23 42.500 25.500C39 25.500 35 24.500 32 23.500C33.500 18 37 13 41 10Z" fill="#6b3a06" stroke="#6b3a06" strokeWidth="0.800" strokeLinejoin="round" />
        <path d="M17 46.500C31 44 44 37 53.500 26.500C58.500 37 52 49 41 53C31 56.500 22 54 17 46.500Z" fill="#87410a" />
        <path d="M17.500 46.500C31 44.500 44 37.500 53.500 27L55 33.500C46 43 34 50 21.500 51.500Z" fill="#fbf7f1" stroke="#87410a" strokeWidth="1" strokeLinejoin="round" />
        <path d="M51 23.500C54 19 60 17.500 64 19C66 22 63 26.500 59 26.800C55.500 27 53 25 51 23.500Z" fill="url(#tear)" stroke="#2a88bd" strokeWidth="1.300" />
        <path d="M15 44C10 45 5 49.500 5 54.500C6.500 58 11.500 57 13.500 54C15 51.500 15.500 47 15 44Z" fill="url(#tear)" stroke="#2a88bd" strokeWidth="1.300" />
      </>
    )}
    {name === "grin" && (
      <>
        <path d="M18.500 30C18.500 20.500 27.500 20.500 27.500 30M36.500 30C36.500 20.500 45.500 20.500 45.500 30" fill="none" stroke="#8a4e06" strokeWidth="3.400" strokeLinecap="round" />
        <path d="M10.500 37Q32 39.500 53 37C52 49 43 56 32 56C20 56 11.500 49 10.500 37Z" fill="#fbf7f1" stroke="#6e420f" strokeWidth="1.600" strokeLinejoin="round" />
        <path d="M12 43Q32 52.500 51.500 43" fill="none" stroke="#6e420f" strokeWidth="1.600" />
      </>
    )}
    {name === "joy" && (
      <>
        <path d="M8.500 25Q14 19.500 21.500 22M42.500 22Q50 19.500 55.500 25" fill="none" stroke="#b5710c" strokeWidth="2" strokeLinecap="round" />
        <path d="M13 32.500Q21 24 28 32.500Q20 29.500 13 32.500ZM36 32.500Q43 24 51 32.500Q44 29.500 36 32.500Z" fill="#7a4207" stroke="#7a4207" strokeWidth="1.600" strokeLinejoin="round" />
        <path d="M12 37.500Q32 43 52 37.500C53 49 44 56.500 32 56.500C20 56.500 11 49 12 37.500Z" fill="#87410a" />
        <path d="M12 37.500Q32 43 52 37.500L51 43Q32 49 13 43Z" fill="#fbf7f1" stroke="#87410a" strokeWidth="0.800" />
        <path d="M11 35C3 37 -3.500 43 -3 49C-1 54 7 54 9.500 48C11 44 11.500 39 11 35Z" fill="url(#tear)" stroke="#3aa3dc" strokeWidth="1" />
        <path d="M53 35C61 37 67.500 43 67 49C65 54 57 54 54.500 48C53 44 52.500 39 53 35Z" fill="url(#tear)" stroke="#3aa3dc" strokeWidth="1" />
      </>
    )}
  </EmojiSvg>
);

/* ---------- Messages ---------- */

const Screen = styled.div`
  min-height: 100vh;
  display: flex;
  flex-direction: column;
  background: #000;
  color: #fff;
  font-family: Roboto, "Noto Sans", sans-serif;
`;

const HeaderEdge = styled.div`
  height: 5px;
  flex: none;
  background: #29282b;
`;

const Chat = styled.main`
  position: relative;
  flex: 1;
  overflow: hidden;
  background: #000;
`;

const Thread = styled.ol`
  position: relative;
  list-style: none;
  margin: -40px 0 0;
  padding: 0 21px 24px;
  display: flex;
  flex-direction: column;
  align-items: flex-start;
`;

type Side = "in" | "out";
type Shade = "violet" | "teal" | "blue" | "deep";

const shades: Record<Shade, string> = {
  violet: "linear-gradient(100deg, #4b6aa5 0%, #4f62a5 55%, #585ba8 100%)",
  teal: "linear-gradient(100deg, #4180a7 0%, #4a6ea6 40%, #5459a4 85%, #5755a5 100%)",
  deep: "linear-gradient(100deg, #4868a4 0%, #4d5ca3 45%, #5157a2 100%)",
  blue: "linear-gradient(100deg, #4379a5 0%, #4a62a4 35%, #4e5aa2 70%, #5156a1 100%)",
};

const Bubble = styled.li<{ $side: Side; $gap: number; $shade?: Shade; $roomy?: boolean; $corners: string; $max?: number }>`
  position: relative;
  display: ${(p) => (p.$max ? "block" : "flex")};
  align-items: flex-end;
  align-self: ${(p) => (p.$side === "in" ? "flex-start" : "flex-end")};
  max-width: ${(p) => (p.$max ? `${p.$max}px` : "85%")};
  margin-top: ${(p) => p.$gap}px;
  padding: ${(p) => (p.$roomy ? "14px" : "16px")} ${(p) => (p.$side === "in" ? "21px" : "11px")} ${(p) => (p.$roomy ? "12px" : "10px")} 20px;
  column-gap: 14px;
  border-radius: ${(p) => p.$corners};
  background: ${(p) => (p.$side === "in" ? "#232124" : shades[p.$shade || "teal"])};
`;

const Words = styled.p`
  margin: 0;
  font-size: 42px;
  line-height: 49px;
`;

const InlineEmoji = styled.span`
  display: inline-block;
  vertical-align: top;
  height: 49px;
  padding: 4px 1px 0;
`;

const Meta = styled.span<{ $muted?: boolean; $low?: boolean; $float?: boolean }>`
  display: flex;
  align-items: center;
  gap: 8px;
  margin-bottom: ${(p) => (p.$low ? "-6px" : "-2px")};
  font-size: 21px;
  line-height: 26px;
  white-space: nowrap;
  color: ${(p) => (p.$muted ? "#7f7d80" : "#fff")};
  ${(p) =>
    p.$float &&
    css`
      float: right;
      margin-top: ${p.$low ? "29px" : "25px"};
    `}
`;

const Tail = styled.svg<{ $side: Side }>`
  position: absolute;
  bottom: 0;
  ${(p) => (p.$side === "in" ? "left: -10px;" : "right: -10px; transform: scaleX(-1);")}
`;

const BubbleTail = ({ side }: { side: Side }) => (
  <Tail $side={side} width="11" height="40" viewBox="0 0 11 40" aria-hidden="true">
    <path d="M11 0H10V16C10 27 7 34 0 39V40H11Z" fill={side === "in" ? "#232124" : "#585ba8"} />
  </Tail>
);

const Ticks = ({ double }: { double?: boolean }) => (
  <svg width="30" height="18" viewBox="0 0 30 18" fill="none" stroke="#fff" strokeWidth="2.7" strokeLinecap="round" strokeLinejoin="round" role="img" aria-label={double ? "Okundu" : "Gönderildi"}>
    {double ? (
      <path d="M1.500 9.500L7 15.500L20 2M11.500 13L14 15.500L28.500 2" />
    ) : (
      <path d="M8.500 9.500L14 15.500L27.500 2.500" />
    )}
  </svg>
);

const EmojiMessage = styled.li<{ $gap: number }>`
  align-self: flex-end;
  display: flex;
  flex-direction: column;
  align-items: flex-end;
  margin-top: ${(p) => p.$gap}px;
`;

const EmojiRow = styled.div<{ $space: number; $inset: number }>`
  display: flex;
  gap: ${(p) => p.$space}px;
  margin-right: ${(p) => p.$inset}px;
`;

const Pill = styled.span`
  display: flex;
  align-items: center;
  gap: 11px;
  height: 31px;
  margin: 14px 17px 0 0;
  padding: 0 12px;
  border-radius: 16px;
  background: rgba(34, 40, 54, 0.85);
  font-size: 21px;
  line-height: 26px;
`;

const Reply = styled.blockquote`
  width: 378px;
  margin: 0 25px 30px 0;
  padding: 6px 20px 5px 15px;
  border-left: 6px solid #fff;
  border-radius: 8px;
  background: linear-gradient(100deg, #2d2f43, #27303f);
  line-height: 42px;
  white-space: nowrap;
`;

const ReplyName = styled.cite`
  display: block;
  font-style: normal;
  font-weight: 500;
  font-size: 34px;
`;

const ReplyText = styled.span`
  display: block;
  font-size: 34px;
`;

const ScrollThumb = styled.div`
  position: absolute;
  top: 53px;
  right: 0;
  width: 8px;
  height: 218px;
  border: 2px solid #555558;
  border-right: 0;
  border-radius: 6px 0 0 6px;
  background: #424244;
`;

/* ---------- Composer and system bar ---------- */

const Composer = styled.form`
  position: relative;
  flex: none;
  display: flex;
  align-items: center;
  height: 89px;
  padding: 0 21px 0 27px;
  background: #1f1f20;
`;

const IconButton = styled.button`
  width: 44px;
  height: 48px;
  display: grid;
  place-items: center;
  flex: none;
  color: #7d7d7e;
`;

const MessageInput = styled.input`
  flex: 1;
  min-width: 0;
  height: 43px;
  margin: 0 19px;
  padding: 0;
  border: 0;
  outline: 0;
  color: #fff;
  font: 32px/43px Roboto, "Noto Sans", sans-serif;
  background: linear-gradient(#b488d9, #b488d9) 0 0 / 4px 100% no-repeat;
  &::placeholder { color: #757576; opacity: 1; }
`;

const Tools = styled.div`
  display: flex;
  gap: 42px;
`;

const Corner = styled.svg`
  position: absolute;
  right: 0;
  bottom: 0;
`;

const NavBar = styled.nav`
  flex: none;
  display: grid;
  grid-template-columns: repeat(3, 1fr);
  height: 86px;
  padding: 0 57px 2px 53px;
  background: #000;
`;

const NavButton = styled.button`
  display: grid;
  place-items: center;
`;

const Time = () => <time>9:44 AM</time>;

const OUT_MID = "28px 8px 8px 28px";

export default function App() {
  return (
    <Screen>
      <GlobalStyle />
      <EmojiDefs />
      <HeaderEdge />
      <Chat>
        <Wallpaper />
        <Thread>
          <Bubble $side="out" $gap={0} $shade="violet" $roomy $corners="28px 8px 0 28px">
            <Words>Onun yerine</Words>
            <Meta $low><Time /><Ticks double /></Meta>
            <BubbleTail side="out" />
          </Bubble>
          <Bubble $side="in" $gap={12} $roomy $corners="28px 28px 28px 0">
            <Words>Vaktini</Words>
            <Meta $muted $low><Time /></Meta>
            <BubbleTail side="in" />
          </Bubble>
          <EmojiMessage $gap={17}>
            <EmojiRow $space={17} $inset={15}>
              {[0, 1, 2].map((i) => <Emoji key={i} name="rofl" size={64} />)}
            </EmojiRow>
            <Pill><Time /><Ticks double /></Pill>
          </EmojiMessage>
          <Bubble $side="out" $gap={21} $corners={OUT_MID}>
            <Words>Manga okudum</Words>
            <Meta><Time /><Ticks double /></Meta>
          </Bubble>
          <Bubble $side="out" $gap={4} $corners={OUT_MID}>
            <Words>Bi 1000 seri</Words>
            <Meta><Time /><Ticks double /></Meta>
          </Bubble>
          <EmojiMessage $gap={15}>
            <EmojiRow $space={17} $inset={15}>
              {[0, 1, 2].map((i) => <Emoji key={i} name="grin" size={64} />)}
            </EmojiRow>
            <Pill><Time /><Ticks double /></Pill>
          </EmojiMessage>
          <Bubble $side="in" $gap={25} $roomy $corners="28px 28px 28px 0" $max={580}>
            <Words>
              Allahhhhhhh belanı vermesin{" "}
              <InlineEmoji><Emoji name="rofl" size={46} /></InlineEmoji>
              <Meta $muted $low $float><Time /></Meta>
            </Words>
            <BubbleTail side="in" />
          </Bubble>
          <Bubble $side="out" $gap={12} $shade="deep" $roomy $corners="28px 28px 8px 28px">
            <Words>Bu yıl</Words>
            <Meta $low><Time /><Ticks /></Meta>
          </Bubble>
          <Bubble $side="out" $gap={4} $shade="blue" $corners={OUT_MID} $max={481}>
            <Words>
              Bide 85 90 yakın hikaye yazdım
              <Meta $float><Time /><Ticks /></Meta>
            </Words>
          </Bubble>
          <EmojiMessage $gap={20}>
            <Reply>
              <ReplyName>Emrah Demirci</ReplyName>
              <ReplyText>Allahhhhhhh belanı v…</ReplyText>
            </Reply>
            <EmojiRow $space={12} $inset={11}>
              {[0, 1, 2, 3, 4, 5].map((i) => <Emoji key={i} name="joy" size={46} />)}
            </EmojiRow>
            <Pill><Time /><Ticks /></Pill>
          </EmojiMessage>
        </Thread>
        <ScrollThumb />
      </Chat>
      <Composer onSubmit={(ev) => ev.preventDefault()}>
        <IconButton type="button" aria-label="Emoji">
          <svg width="44" height="44" viewBox="0 0 44 44" fill="none" stroke="currentColor" strokeWidth="2.6" strokeLinecap="round">
            <circle cx="22" cy="22" r="19.700" />
            <path d="M13.500 27.500C17 32.500 27 32.500 30.500 27.500" />
            <ellipse cx="15.500" cy="18" rx="1.200" ry="1.800" fill="currentColor" />
            <ellipse cx="28.500" cy="18" rx="1.200" ry="1.800" fill="currentColor" />
          </svg>
        </IconButton>
        <MessageInput type="text" aria-label="Mesaj" placeholder="Mesaj yazın" />
        <Tools>
          <IconButton type="button" aria-label="Dosya ekle">
            <svg width="44" height="48" viewBox="0 0 44 48" fill="none" stroke="currentColor" strokeWidth="2.8" strokeLinecap="round" strokeLinejoin="round">
              <path d="M6.500 20L15 11.500C21 5.500 29 3 35.500 9C41.500 15 40.500 23 34.500 29L22 41C17 45.500 11.500 44.500 8.500 41.500C5 38 5 32 9 28L21 16C25 12.500 28 13.500 30 15.500C32 17.500 32 21 29 24L18 34.500" />
            </svg>
          </IconButton>
          <IconButton type="button" aria-label="Sesli mesaj">
            <svg width="44" height="48" viewBox="0 0 44 48" fill="none" stroke="currentColor" strokeWidth="2.8" strokeLinecap="round">
              <rect x="13" y="3" width="18" height="30" rx="9" />
              <path d="M7 25.500C7 34 13.500 40 22 40C30.500 40 37 34 37 25.500M22 40V46" />
            </svg>
          </IconButton>
        </Tools>
        <Corner width="44" height="44" viewBox="0 0 44 44" aria-hidden="true">
          <path d="M0 44L44 0V44Z" fill="#fff" />
          <path d="M20 26.500Q20 24.500 22 24.500H27.500L30 27H38Q40 27 40 29V38.500Q40 40.500 38 40.500H22Q20 40.500 20 38.500Z" fill="#3f74e0" />
          <path d="M30 30a2 2 0 0 1 1 3.700V37H29V33.700A2 2 0 0 1 30 30Z" fill="#fff" />
        </Corner>
      </Composer>
      <NavBar>
        <NavButton type="button" aria-label="Son uygulamalar">
          <svg width="28" height="28" viewBox="0 0 28 28" stroke="#bdbdbd" strokeWidth="2.4" strokeLinecap="round">
            <path d="M2.500 2V26M14 2V26M25.500 2V26" />
          </svg>
        </NavButton>
        <NavButton type="button" aria-label="Ana ekran">
          <svg width="30" height="30" viewBox="0 0 30 30" fill="none" stroke="#bdbdbd" strokeWidth="2.2">
            <rect x="2" y="2" width="26" height="26" rx="8" />
          </svg>
        </NavButton>
        <NavButton type="button" aria-label="Geri">
          <svg width="18" height="30" viewBox="0 0 18 30" fill="none" stroke="#bdbdbd" strokeWidth="2.4" strokeLinecap="round" strokeLinejoin="round">
            <path d="M16 2L2 15L16 28" />
          </svg>
        </NavButton>
      </NavBar>
    </Screen>
  );
}
